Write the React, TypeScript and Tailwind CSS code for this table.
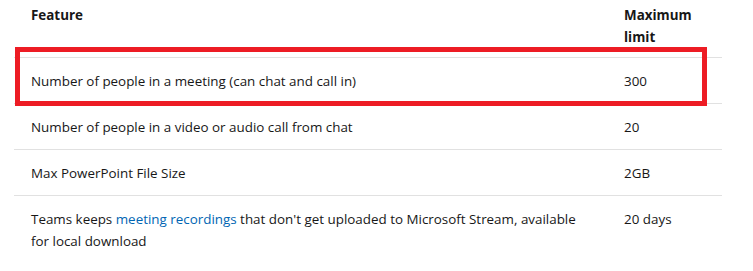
import React from "react";

const rows: { f: React.ReactNode; v: string }[] = [
  { f: "Number of people in a meeting (can chat and call in)", v: "300" },
  { f: "Number of people in a video or audio call from chat", v: "20" },
  { f: "Max PowerPoint File Size", v: "2GB" },
  {
    f: (
      <>
        Teams keeps <span className="text-[#0065b3]">meeting recordings</span> that don't get uploaded to Microsoft Stream, available
        <br />
        for local download
      </>
    ),
    v: "20 days",
  },
];

export default function App() {
  return (
    <div
      className="relative w-[753px] h-[271px] bg-white text-[#171717] text-[13.4px] leading-[22px] overflow-hidden"
      style={{ fontFamily: '"Open Sans", "Noto Sans", sans-serif' }}
    >
      <div className="ml-[14px] w-[708px]">
        <div className="grid grid-cols-[594px_114px] font-bold">
          <div className="pl-[17px] pt-[4px]">Feature</div>
          <div className="pl-[16px] pt-[4px] pb-[9px]">
            Maximum
            <br />
            limit
          </div>
        </div>
        {rows.map((r, i) => (
          <div key={i} className="grid grid-cols-[594px_114px] border-t border-[#e1e1e1]">
            <div className="pl-[17px] pt-[12px] pb-[11px]">{r.f}</div>
            <div className="pl-[16px] pt-[12px] pb-[11px]">{r.v}</div>
          </div>
        ))}
      </div>
      <div className="absolute left-[15px] top-[47px] w-[692px] h-[59px] border-[5px] border-[#ed1c24]" />
    </div>
  );
}
